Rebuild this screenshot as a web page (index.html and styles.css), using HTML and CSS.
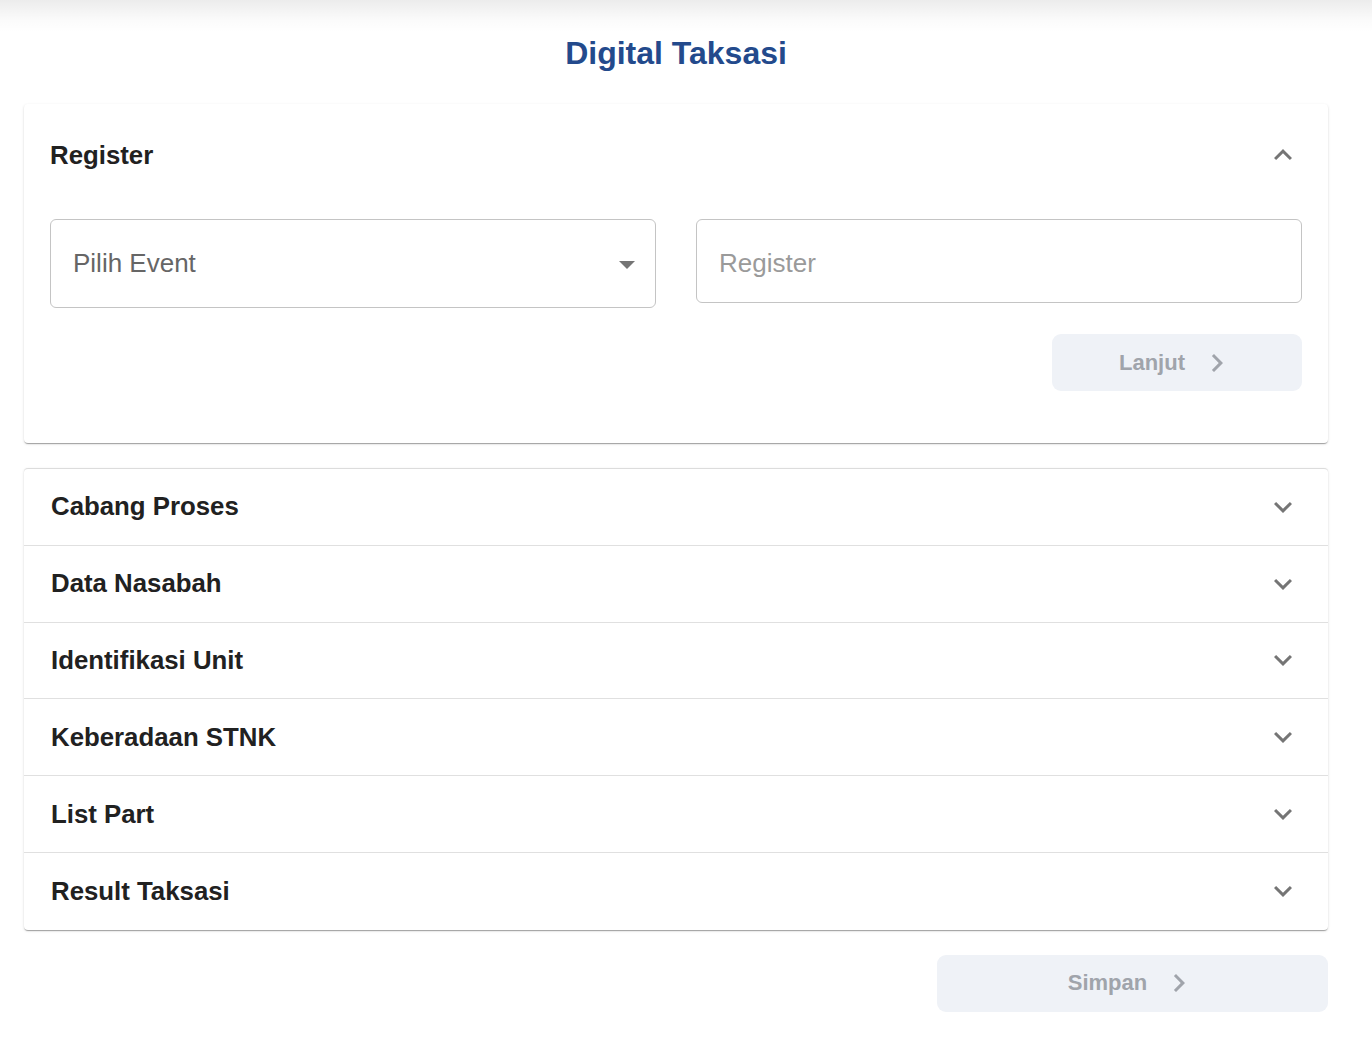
FILE: index.html
```html
<!DOCTYPE html>
<html lang="id">
<head>
<meta charset="utf-8">
<title>Digital Taksasi</title>
<link rel="stylesheet" href="styles.css">
</head>
<body>
<main class="page">
  <h1 class="title">Digital Taksasi</h1>

  <section class="card card-register">
    <div class="acc-head">
      <span class="acc-title">Register</span>
      <svg class="acc-icon" viewBox="0 0 24 24"><path d="M12 8l-6 6 1.41 1.41L12 10.83l4.59 4.58L18 14z"/></svg>
    </div>
    <div class="acc-body">
      <div class="fields">
        <div class="field field-select">
          <span class="select-value">Pilih Event</span>
          <svg class="drop" viewBox="0 0 16 8"><polygon points="0,0 16,0 8,8"/></svg>
        </div>
        <div class="field field-input">
          <span class="placeholder">Register</span>
        </div>
      </div>
      <div class="actions">
        <button class="btn btn-lanjut" type="button">
          <span>Lanjut</span>
          <svg class="btn-icon" viewBox="0 0 24 24"><path d="M10 6 8.59 7.41 13.17 12l-4.58 4.59L10 18l6-6z"/></svg>
        </button>
      </div>
    </div>
  </section>

  <section class="card card-list">
    <div class="row"><span class="acc-title">Cabang Proses</span><svg class="acc-icon" viewBox="0 0 24 24"><path d="M16.59 8.59 12 13.17 7.41 8.59 6 10l6 6 6-6z"/></svg></div>
    <div class="row"><span class="acc-title">Data Nasabah</span><svg class="acc-icon" viewBox="0 0 24 24"><path d="M16.59 8.59 12 13.17 7.41 8.59 6 10l6 6 6-6z"/></svg></div>
    <div class="row"><span class="acc-title">Identifikasi Unit</span><svg class="acc-icon" viewBox="0 0 24 24"><path d="M16.59 8.59 12 13.17 7.41 8.59 6 10l6 6 6-6z"/></svg></div>
    <div class="row"><span class="acc-title">Keberadaan STNK</span><svg class="acc-icon" viewBox="0 0 24 24"><path d="M16.59 8.59 12 13.17 7.41 8.59 6 10l6 6 6-6z"/></svg></div>
    <div class="row"><span class="acc-title">List Part</span><svg class="acc-icon" viewBox="0 0 24 24"><path d="M16.59 8.59 12 13.17 7.41 8.59 6 10l6 6 6-6z"/></svg></div>
    <div class="row"><span class="acc-title">Result Taksasi</span><svg class="acc-icon" viewBox="0 0 24 24"><path d="M16.59 8.59 12 13.17 7.41 8.59 6 10l6 6 6-6z"/></svg></div>
  </section>

  <div class="footer-actions">
    <button class="btn btn-simpan" type="button">
      <span>Simpan</span>
      <svg class="btn-icon" viewBox="0 0 24 24"><path d="M10 6 8.59 7.41 13.17 12l-4.58 4.59L10 18l6-6z"/></svg>
    </button>
  </div>
</main>
</body>
</html>
```

FILE: styles.css
```css
* { box-sizing: border-box; }

html, body { height: 100%; }

body {
  margin: 0;
  font-family: "Liberation Sans", Arial, sans-serif;
  color: #212121;
  background: #fff linear-gradient(to bottom, rgba(0,0,0,0.075), rgba(0,0,0,0.02) 60%, rgba(0,0,0,0)) no-repeat top left / 100% 32px;
}

.page {
  margin: 0 44px 0 24px;
  padding-top: 34px;
}

.title {
  margin: 0 0 32px;
  text-align: center;
  font-size: 32px;
  line-height: 38px;
  font-weight: 700;
  color: #234a8c;
}

.card {
  background: #fff;
  border-radius: 4px;
  box-shadow: 0 2px 1px -1px rgba(0,0,0,0.2), 0 1px 1px 0 rgba(0,0,0,0.14), 0 1px 3px 0 rgba(0,0,0,0.12);
}

.acc-head {
  height: 102px;
  display: flex;
  align-items: center;
  justify-content: space-between;
  padding: 0 27px 0 26px;
}

.acc-title {
  font-size: 25.8px;
  font-weight: 700;
  color: #212121;
}

.acc-icon {
  width: 36px;
  height: 36px;
  fill: #757575;
  flex: none;
}

.acc-body {
  padding: 13px 26px 52px;
}

.fields {
  display: grid;
  grid-template-columns: 1fr 1fr;
  column-gap: 40px;
  align-items: start;
}

.field {
  border: 1px solid #c4c4c4;
  border-radius: 6px;
  display: flex;
  align-items: center;
  padding: 0 20px 0 22px;
  font-size: 26px;
}

.field-select {
  height: 89px;
  justify-content: space-between;
}

.field-input {
  height: 84px;
  padding-top: 4px;
}

.select-value { color: #666; }

.placeholder { color: #9a9a9a; }

.drop {
  width: 16px;
  height: 8px;
  fill: #757575;
  margin-top: 2px;
}

.actions {
  display: flex;
  justify-content: flex-end;
  margin-top: 26px;
}

.btn {
  border: 0;
  border-radius: 9px;
  background: #eff2f7;
  color: #a0a4ab;
  font-family: "Liberation Sans", Arial, sans-serif;
  font-size: 22px;
  font-weight: 700;
  height: 57px;
  display: flex;
  align-items: center;
  justify-content: center;
  gap: 14px;
  padding: 0;
}

.btn-icon {
  width: 36px;
  height: 36px;
  fill: #a0a4ab;
}

.btn-lanjut { width: 250px; }

.card-list {
  margin-top: 25px;
  border-top: 1px solid #dcdcdc;
}

.row {
  height: 76.8px;
  display: flex;
  align-items: center;
  justify-content: space-between;
  padding: 0 27px 0 27px;
  border-bottom: 1px solid #e0e0e0;
}

.row:last-child { border-bottom: 0; }

.footer-actions {
  display: flex;
  justify-content: flex-end;
  margin-top: 25px;
}

.btn-simpan { width: 391px; }
```
